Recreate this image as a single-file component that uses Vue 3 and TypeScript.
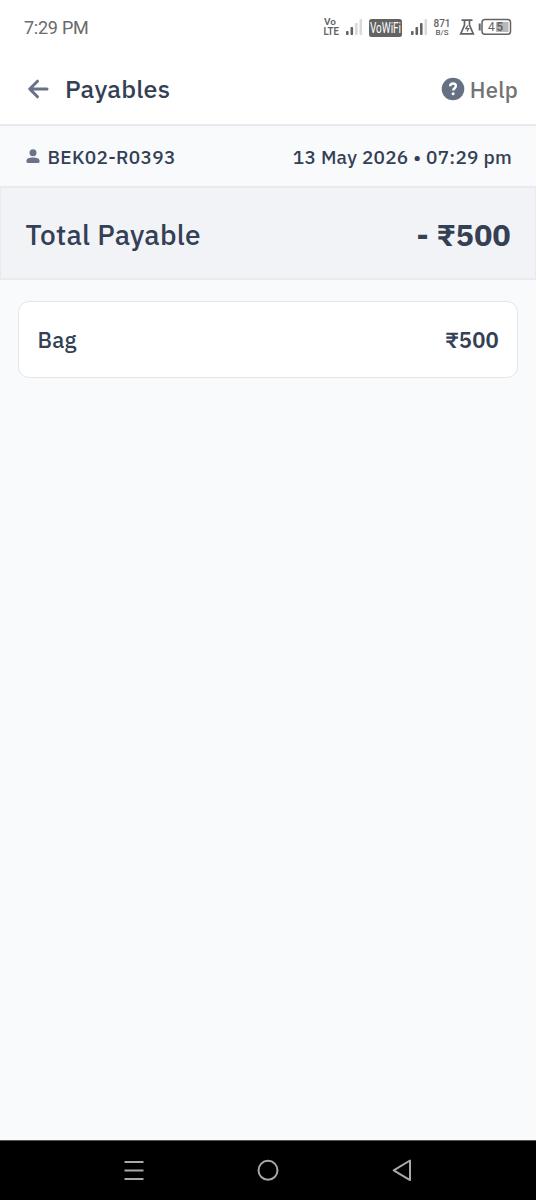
<script setup lang="ts">
interface PayableItem {
  label: string
  amount: number
}

const account = 'BEK02-R0393'
const timestamp = '13 May 2026 • 07:29 pm'
const items: PayableItem[] = [{ label: 'Bag', amount: 500 }]
const total = items.reduce((sum, item) => sum + item.amount, 0)
</script>

<template>
  <div class="screen">
    <div class="status">
      <span class="clock">7:29 PM</span>
      <svg class="indicators" width="192" height="24" viewBox="0 0 192 24">
        <g fill="#636363">
          <text x="4" y="11.300" font-size="9" font-weight="600" textLength="12" lengthAdjust="spacingAndGlyphs">Vo</text>
          <text x="3.500" y="20.800" font-size="10" font-weight="600" textLength="15.500" lengthAdjust="spacingAndGlyphs">LTE</text>
          <rect x="26" y="17" width="2.600" height="4" rx=".8" />
          <rect x="30.500" y="13" width="2.600" height="8" rx=".8" />
          <rect x="35" y="9" width="2.600" height="12" rx=".8" fill="#d9d9d9" />
          <rect x="39.500" y="5" width="2.600" height="16" rx=".8" fill="#d9d9d9" />
          <rect x="49" y="5" width="33" height="18" rx="2.500" />
          <text x="50" y="19.300" font-size="14" font-weight="400" fill="#fff" textLength="31" lengthAdjust="spacingAndGlyphs">VoWiFi</text>
          <rect x="91" y="17" width="2.600" height="4" rx=".8" />
          <rect x="95.500" y="13" width="2.600" height="8" rx=".8" />
          <rect x="100" y="9" width="2.600" height="12" rx=".8" />
          <rect x="104.500" y="5" width="2.600" height="16" rx=".8" fill="#d9d9d9" />
          <text x="113.500" y="13" font-size="10.500" font-weight="500" textLength="17" lengthAdjust="spacingAndGlyphs">871</text>
          <text x="115.500" y="21.200" font-size="7.500" font-weight="500" textLength="13" lengthAdjust="spacingAndGlyphs">B/S</text>
        </g>
        <g fill="none" stroke="#636363" stroke-width="1.700">
          <path d="M141.500 6.200h11M144.500 6.500v4.500l-3.800 8.800h12.600l-3.800-8.800V6.500" />
          <path d="M147.800 11.500l-2 3.200h2.800l-1.600 2.800" stroke-width="1.300" />
          <rect x="162" y="5.500" width="28.500" height="14.700" rx="3" stroke-width="1.500" />
          <path d="M159.700 9.500v7" stroke-width="2" />
        </g>
        <rect x="176" y="8" width="12.500" height="10" fill="#b8b8b8" />
        <text x="168" y="17.300" font-size="12" font-weight="400" fill="#636363" textLength="15">4<tspan font-weight="600">5</tspan></text>
      </svg>
    </div>

    <header class="header">
      <svg class="back" width="22" height="22" viewBox="0 0 22 22" fill="none" stroke="#687188" stroke-width="3" stroke-linecap="round" stroke-linejoin="round">
        <path d="M20 11H3M10.500 3.200L2.700 11l7.800 7.800" />
      </svg>
      <h1 class="title">Payables</h1>
      <div class="help">
        <svg width="24" height="24" viewBox="0 0 24 24" fill="none">
          <circle cx="12" cy="12" r="11.300" fill="#667085" />
          <path d="M9.100 9.300C9.200 7.300 10.400 6.500 12 6.500c1.700 0 2.900.9 2.900 2.500 0 2.200-2.700 2.300-2.700 4.500" stroke="#fff" stroke-width="2.400" />
          <circle cx="12.100" cy="16.800" r="1.500" fill="#fff" />
        </svg>
        <span class="help-label">Help</span>
      </div>
    </header>

    <section class="meta">
      <svg class="person" width="14" height="15" viewBox="0 0 14 15" fill="#6b7486">
        <circle cx="7" cy="3.700" r="3.500" />
        <path d="M.5 12.400v-.8C.5 9.600 3 8.500 7 8.500s6.500 1.100 6.500 3.100v.8q0 1.500-1.300 1.500H1.800Q.5 13.900.5 12.400z" />
      </svg>
      <span class="account">{{ account }}</span>
      <span class="date">{{ timestamp }}</span>
    </section>

    <section class="total">
      <span class="total-label">Total Payable</span>
      <span class="total-amount">- ₹{{ total }}</span>
    </section>

    <main class="list">
      <div v-for="item in items" :key="item.label" class="card">
        <span class="item-label">{{ item.label }}</span>
        <span class="item-amount">₹{{ item.amount }}</span>
      </div>
    </main>

    <nav class="navbar">
      <svg width="24" height="24" viewBox="0 0 24 24" fill="none" stroke="#a9a9a9" stroke-width="2">
        <path d="M2.500 3h19M2.500 11.500h19M2.500 20h19" />
      </svg>
      <svg width="24" height="24" viewBox="0 0 24 24" fill="none" stroke="#a9a9a9" stroke-width="2">
        <circle cx="12" cy="11.300" r="9.500" />
      </svg>
      <svg width="24" height="24" viewBox="0 0 24 24" fill="none" stroke="#a9a9a9" stroke-width="2" stroke-linejoin="round">
        <path d="M20 1.500v19.600L3.700 11.300z" />
      </svg>
    </nav>
  </div>
</template>

<style>
body {
  background: #f9fafc;
}
</style>

<style scoped>
.screen {
  width: 536px;
  height: 1200px;
  display: flex;
  flex-direction: column;
  overflow: hidden;
  background: #f9fafc;
  color: #344054;
  font-family: "IBM Plex Sans", "Open Sans", "Noto Sans", sans-serif;
  font-weight: 500;
  white-space: nowrap;
}
.status {
  height: 54px;
  flex: none;
  box-sizing: border-box;
  padding: 0 24px;
  display: flex;
  align-items: center;
  justify-content: space-between;
  background: #fff;
  font-family: Roboto, sans-serif;
}
.clock {
  font-size: 18px;
  font-weight: 400;
  letter-spacing: -0.25px;
  color: #6a6a6a;
}
.indicators {
  margin-top: -2px;
}
.header {
  height: 72px;
  flex: none;
  box-sizing: border-box;
  padding: 0 18px 0 27px;
  display: flex;
  align-items: center;
  background: #fff;
  border-bottom: 2px solid #e8e9ef;
}
.title {
  margin: 0 0 0 16px;
  font-size: 25px;
  font-weight: 500;
  line-height: 36px;
  letter-spacing: 0.25px;
}
.help {
  margin-left: auto;
  display: flex;
  align-items: center;
  gap: 5px;
}
.help-label {
  padding-top: 1px;
  font-size: 22px;
  line-height: 30px;
  letter-spacing: 0.25px;
  color: #737373;
}
.meta {
  height: 60px;
  flex: none;
  box-sizing: border-box;
  padding: 2px 24px 0 26px;
  display: flex;
  align-items: center;
  font-size: 19px;
  letter-spacing: 0.3px;
}
.person {
  margin-top: -1px;
}
.account {
  margin-left: 7.5px;
}
.date {
  margin-left: auto;
  letter-spacing: 0.25px;
}
.total {
  height: 94px;
  flex: none;
  box-sizing: border-box;
  padding: 2px 23px 0;
  display: flex;
  align-items: center;
  justify-content: space-between;
  background: #f2f3f7;
  border: 2px solid #e9eaee;
  border-width: 2px 1px;
}
.total-label {
  margin-left: 1.5px;
  font-size: 28px;
  letter-spacing: 0.25px;
}
.total-amount {
  margin-right: 1px;
  font-size: 30px;
  font-weight: 700;
  letter-spacing: 0.4px;
}
.list {
  flex: 1;
  padding: 21px 18px;
}
.card {
  height: 77px;
  box-sizing: border-box;
  padding: 0 18px 0 18.5px;
  display: flex;
  align-items: center;
  justify-content: space-between;
  background: #fff;
  border: 1px solid #e4e6ea;
  border-radius: 11px;
  font-size: 22px;
  letter-spacing: 0.2px;
}
.item-amount {
  font-weight: 600;
}
.navbar {
  height: 60px;
  flex: none;
  box-sizing: border-box;
  padding: 0 122px;
  display: flex;
  align-items: center;
  justify-content: space-between;
  background: #000;
  border-top: 1px solid #555;
}
</style>
